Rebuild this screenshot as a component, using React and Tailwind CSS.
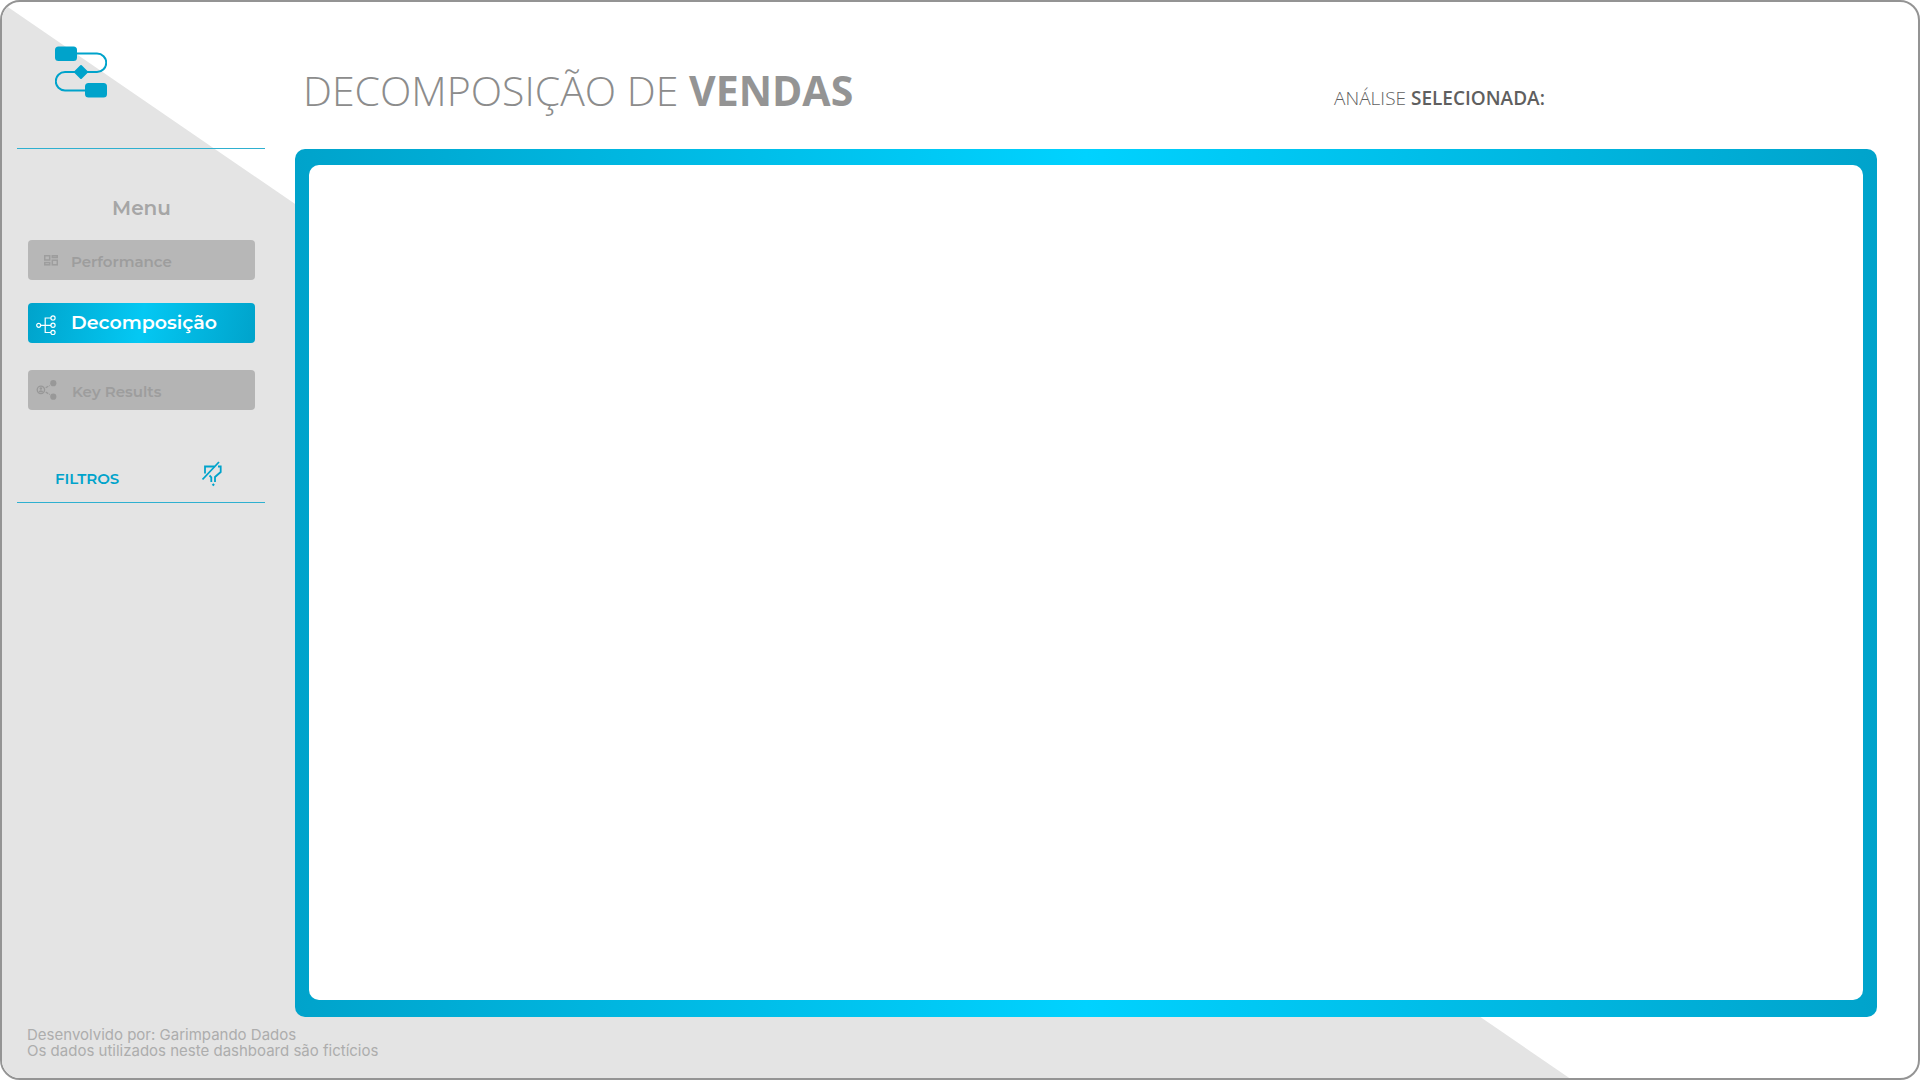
const navBase =
  "flex h-10 w-full items-center rounded px-2 text-left font-semibold";

function Logo() {
  return (
    <svg width="52" height="52" viewBox="0 0 52 52" fill="none" stroke="#00a3cb" strokeWidth="2" aria-hidden="true">
      <path d="M21 7.500H42a9.250 9.250 0 0 1 0 18.500H10a9.250 9.250 0 0 0 0 18.500H31" />
      <rect x="0" y="0.500" width="22" height="14.500" rx="3.500" fill="#00a3cb" stroke="none" />
      <rect x="30" y="37" width="22" height="14.500" rx="3.500" fill="#00a3cb" stroke="none" />
      <path d="M26 20l6 6-6 6-6-6z" fill="#00a3cb" strokeLinejoin="round" />
    </svg>
  );
}

function GridIcon() {
  return (
    <svg width="14" height="11" viewBox="0 0 14 11" fill="none" stroke="currentColor" strokeWidth="1.500" aria-hidden="true">
      <rect x="0.700" y="0.700" width="5" height="4.300" />
      <rect x="8.300" y="0.700" width="5" height="1.800" />
      <rect x="0.700" y="7.600" width="5" height="2.200" />
      <rect x="8.300" y="5.200" width="5" height="4.600" />
    </svg>
  );
}

function TreeIcon() {
  return (
    <svg width="20" height="20" viewBox="0 0 20 20" fill="none" stroke="currentColor" strokeWidth="1.200" aria-hidden="true">
      <circle cx="2.700" cy="10.300" r="2" />
      <circle cx="17" cy="3" r="2.100" />
      <circle cx="17" cy="10.300" r="2.100" />
      <circle cx="17" cy="17.500" r="2.100" />
      <path d="M4.800 10.300H15M15 3H9.200V17.500H15" />
    </svg>
  );
}

function ShareIcon() {
  return (
    <svg width="21" height="20" viewBox="0 0 21 20" fill="none" className="text-[#989898]" aria-hidden="true">
      <circle cx="4.900" cy="9.800" r="3.700" stroke="currentColor" strokeWidth="1.300" />
      <circle cx="4.900" cy="8.500" r="1.200" fill="currentColor" />
      <path d="M2.700 12a2.200 1.800 0 0 1 4.400 0z" fill="currentColor" />
      <circle cx="17.300" cy="3.200" r="3.100" fill="currentColor" />
      <circle cx="17.300" cy="16.700" r="3.100" fill="currentColor" />
      <path d="M9.700 7.800l4-2.300M9.700 12l4 2.500" stroke="currentColor" strokeWidth="1.300" strokeDasharray="3 1" />
    </svg>
  );
}

function ClearFilterIcon() {
  return (
    <svg width="20" height="26" viewBox="0 0 20 26" fill="none" stroke="currentColor" strokeWidth="1.800" aria-hidden="true">
      <path d="M0.500 18.500L17 1" />
      <path d="M3 12.500V5.500H12.500M16 5.500h2.700V11L13 16v5" />
      <path d="M7.500 14.500L9.300 16.300V21" />
      <path d="M11.300 22.300l1.500 1.500-1.500 1.500-1.500-1.500z" fill="currentColor" stroke="none" />
    </svg>
  );
}

function Sidebar() {
  return (
    <aside className="flex w-[248px] shrink-0 flex-col font-[Montserrat,Inter,sans-serif]">
      <a href="#inicio" aria-label="Início" className="ml-[38px] mt-11 block size-[52px]">
        <Logo />
      </a>
      <hr className="mt-[50px] border-[#2fb0d0]" />
      <nav aria-labelledby="menu-title" className="mt-[43px] pr-[10px] pl-[11px]">
        <h2 id="menu-title" className="text-center text-xl leading-8 font-semibold text-[#a6a6a6]">Menu</h2>
        <a href="#performance" className={navBase + " mt-4 bg-[#b7b7b7] text-[#9d9d9d]"}>
          <span className="w-[35px] pl-2"><GridIcon /></span>
          <span className="pt-1 text-[15px] leading-5">Performance</span>
        </a>
        <a href="#decomposicao" aria-current="page" className={navBase + " mt-[23px] bg-[linear-gradient(100deg,#00a3cb,#04c8f3,#00a3cb)] text-white"}>
          <span className="w-[35px] pt-1"><TreeIcon /></span>
          <span className="text-[19px] leading-6">Decomposição</span>
        </a>
        <a href="#key-results" className={navBase + " mt-[27px] bg-[#b4b4b4] text-[#9d9d9d]"}>
          <span className="w-9"><ShareIcon /></span>
          <span className="pt-1 text-[15px] leading-5">Key Results</span>
        </a>
      </nav>
      <div className="mt-[51px] flex h-[42px] items-start justify-between border-b border-[#2fb0d0] pr-[43px] pl-[38px] text-[#00a3cb]">
        <h2 className="mt-1.5 text-[15px] leading-6 font-semibold">FILTROS</h2>
        <button type="button" aria-label="Limpar filtros"><ClearFilterIcon /></button>
      </div>
    </aside>
  );
}

export default function App() {
  return (
    <div className="relative isolate flex min-h-screen flex-col overflow-hidden rounded-[20px] border-2 border-[#949494] bg-white">
      <div className="absolute inset-0 -z-10 bg-[#e4e4e4] [clip-path:polygon(0_1px,81.8%_100%,0_100%)]" />
      <div className="flex flex-1 gap-[30px] pr-[41px] pl-[15px]">
        <Sidebar />
        <main className="flex min-w-0 flex-1 flex-col font-['Open_Sans',sans-serif]">
          <header className="flex h-[147px] items-center pt-7 pl-2">
            <h1 className="w-[65%] text-[41px] leading-[60px] font-light text-[#8c8c8c]">
              DECOMPOSIÇÃO DE <strong className="font-bold text-[#949494]">VENDAS</strong>
            </h1>
            <p className="mt-4 pl-2 text-[19px] leading-7 font-light text-[#5f5f5f]">
              ANÁLISE <strong className="font-semibold">SELECIONADA:</strong>
            </p>
          </header>
          <section aria-label="Decomposição de vendas" className="flex flex-1 rounded-[10px] bg-[linear-gradient(90deg,#00a3cb,#00d2ff,#00a3cb)] px-[14px] pt-4 pb-[17px]">
            <div className="flex-1 rounded-[10px] bg-white" />
          </section>
        </main>
      </div>
      <footer className="h-[61px] pt-[10px] pl-[25px] font-[Inter,sans-serif] text-[15px] leading-4 text-[#adadad]">
        <p>Desenvolvido por: Garimpando Dados</p>
        <p>Os dados utilizados neste dashboard são fictícios</p>
      </footer>
    </div>
  );
}
